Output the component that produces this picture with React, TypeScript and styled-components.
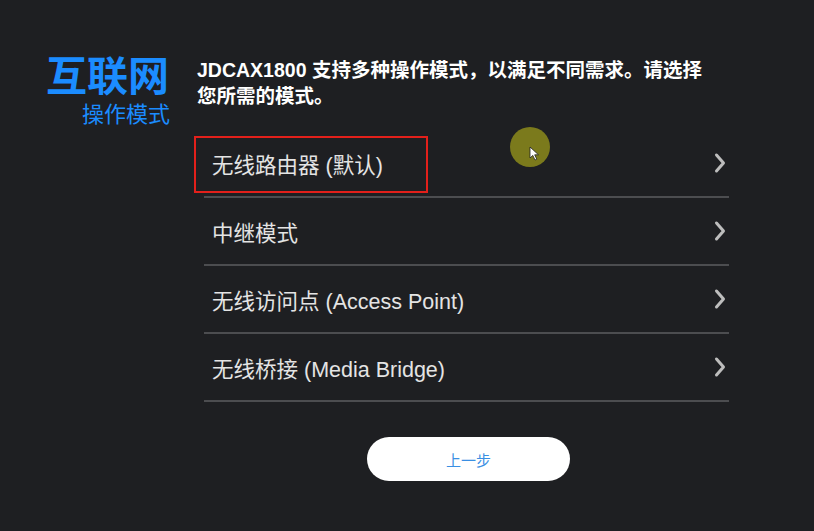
import React from "react";
import styled, { createGlobalStyle } from "styled-components";

const Global = createGlobalStyle`
  html, body { margin: 0; padding: 0; background: #1e1f22; }
  body { font-family: "Liberation Sans", "Noto Sans CJK SC", sans-serif; }
`;

const Page = styled.div`
  position: relative;
  width: 814px;
  height: 531px;
  background: #1e1f22;
  display: flex;
  align-items: flex-start;
  padding-top: 52px;
  box-sizing: border-box;
  overflow: hidden;
`;

const Side = styled.div`
  width: 170px;
  display: flex;
  flex-direction: column;
  align-items: flex-end;
  color: #1b8cff;
  font-family: "Noto Sans CJK SC", sans-serif;
`;

const Brand = styled.div`
  font-size: 41px;
  font-weight: 700;
  line-height: 44px;
  margin-top: -1px;
  margin-right: 1px;
`;

const SubBrand = styled.div`
  font-size: 22px;
  line-height: 26px;
  margin-top: 4px;
`;

const Main = styled.div`
  margin-left: 27px;
  width: 532px;
  display: flex;
  flex-direction: column;
`;

const Heading = styled.div`
  color: #ffffff;
  font-size: 19.5px;
  font-weight: 700;
  line-height: 26px;
  max-width: 515px;
  padding-top: 5px;
`;

const List = styled.div`
  margin-top: 21px;
  margin-left: 7px;
  width: 525px;
  display: flex;
  flex-direction: column;
`;

const Row = styled.div`
  position: relative;
  box-sizing: border-box;
  height: 68px;
  display: flex;
  align-items: center;
  justify-content: space-between;
  padding: 0 3px 0 8px;
  border-bottom: 2px solid #4c4d50;
  color: #e4e4e4;
  font-size: 21.5px;
`;

const Label = styled.span`
  letter-spacing: 0;
`;

const Annotation = styled.div`
  position: absolute;
  left: -10px;
  top: 6px;
  width: 230px;
  height: 53px;
  border: 2px solid #e3201b;
  pointer-events: none;
`;

const Footer = styled.div`
  display: flex;
  justify-content: center;
  margin-top: 35px;
  padding-left: 4px;
`;

const BackButton = styled.button`
  width: 203px;
  height: 44px;
  border: none;
  border-radius: 22px;
  background: #ffffff;
  color: #3a8fe3;
  font-family: "Noto Sans CJK SC", sans-serif;
  font-size: 15px;
  cursor: pointer;
`;

const Cursor = styled.div`
  position: absolute;
  left: 510px;
  top: 127px;
  width: 40px;
  height: 40px;
  border-radius: 50%;
  background: #7b7a1c;
`;

const Chevron = () => (
  <svg width="12" height="22" viewBox="0 0 12 22">
    <polyline
      points="2.5,3 9.5,11 2.5,19"
      fill="none"
      stroke="#bdbdbd"
      strokeWidth="3"
      strokeLinecap="round"
      strokeLinejoin="round"
    />
  </svg>
);

const Arrow = () => (
  <svg
    width="12"
    height="16"
    viewBox="0 0 12 16"
    style={{ position: "absolute", left: 19, top: 19 }}
  >
    <path
      d="M1 1 L1 12 L3.8 9.4 L6 14 L7.8 13.2 L5.7 8.8 L9.5 8.8 Z"
      fill="#ffffff"
      stroke="#222"
      strokeWidth="0.8"
      strokeLinejoin="round"
    />
  </svg>
);

const modes = [
  "无线路由器 (默认)",
  "中继模式",
  "无线访问点 (Access Point)",
  "无线桥接 (Media Bridge)",
];

export default function App() {
  return (
    <>
      <Global />
      <Page>
        <Side>
          <Brand>互联网</Brand>
          <SubBrand>操作模式</SubBrand>
        </Side>
        <Main>
          <Heading>
            JDCAX1800 支持多种操作模式，以满足不同需求。请选择您所需的模式。
          </Heading>
          <List>
            {modes.map((m, i) => (
              <Row key={m}>
                <Label>{m}</Label>
                <Chevron />
                {i === 0 && <Annotation />}
              </Row>
            ))}
            <Footer>
              <BackButton>上一步</BackButton>
            </Footer>
          </List>
        </Main>
        <Cursor>
          <Arrow />
        </Cursor>
      </Page>
    </>
  );
}
